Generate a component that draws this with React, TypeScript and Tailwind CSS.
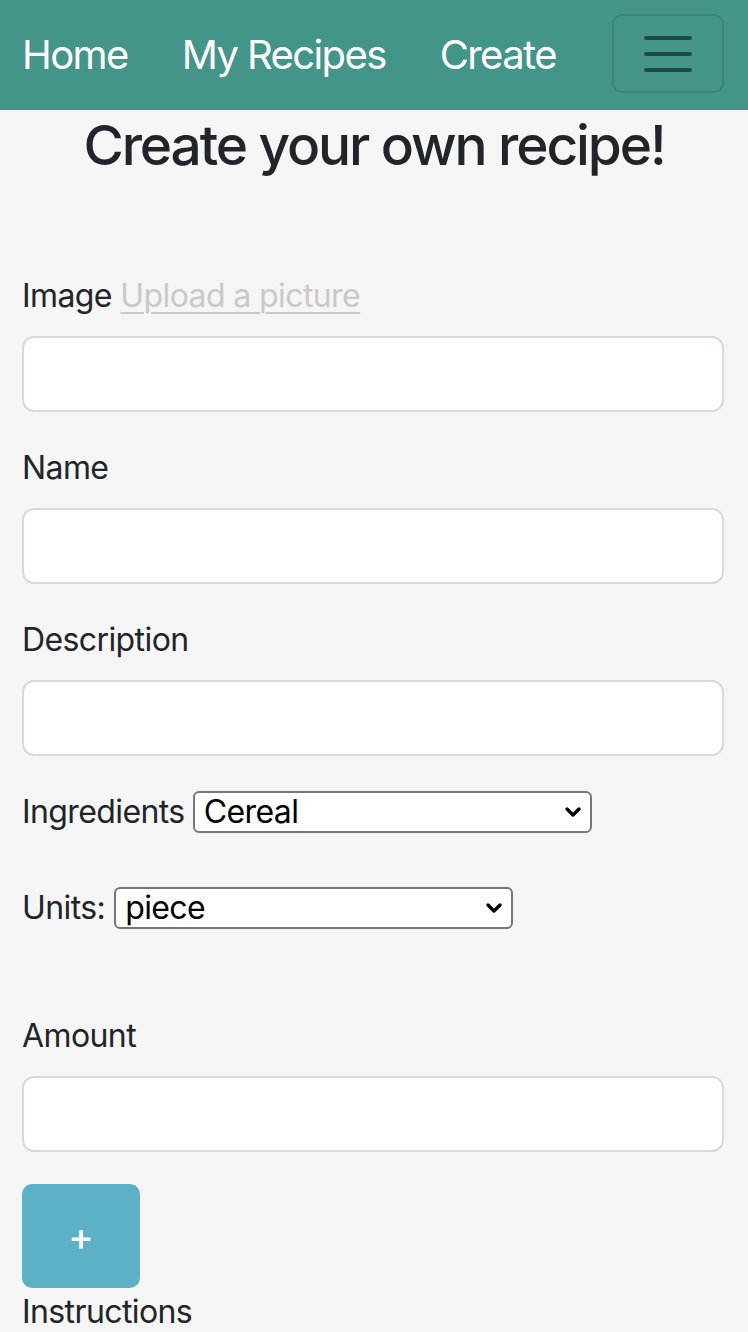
import React from "react";

function Chevron() {
  return (
    <svg
      className="pointer-events-none absolute right-[10px] top-1/2 -translate-y-1/2"
      width="18"
      height="12"
      viewBox="0 0 18 12"
      fill="none"
    >
      <path d="M3 3 L9 9 L15 3" stroke="#000" strokeWidth="3.4" strokeLinecap="round" strokeLinejoin="round" />
    </svg>
  );
}

function Select({ value, width }: { value: string; width: string }) {
  return (
    <div className={`relative ${width} h-[42px]`}>
      <select
        defaultValue={value}
        className="h-full w-full appearance-none rounded-[6px] border-2 border-[#767676] bg-white pl-[9px] text-[32px] leading-[38px] tracking-[-0.6px] text-black outline-none"
      >
        <option>{value}</option>
      </select>
      <Chevron />
    </div>
  );
}

function Field({ label, extra }: { label: string; extra?: React.ReactNode }) {
  return (
    <div className="mb-[32px]">
      <label className="mb-[16px] block text-[32px] leading-[48px] tracking-[-0.6px]">
        {label}
        {extra}
      </label>
      <input className="block h-[76px] w-full rounded-[12px] border-2 border-[#d6d9dd] bg-white outline-none" />
    </div>
  );
}

export default function App() {
  return (
    <div className="min-h-[1332px] bg-[#f5f5f5] font-[Inter,sans-serif] text-[#212529]">
      <nav className="flex h-[110px] items-start justify-between bg-[#43958a] pl-[22px] pr-[24px]">
        <div className="mt-[25px] flex gap-[54px] text-[40px] leading-[60px] tracking-[-1.6px] text-white">
          <a>Home</a>
          <a>My Recipes</a>
          <a>Create</a>
        </div>
        <button className="mt-[14px] flex h-[79px] w-[112px] flex-col items-center justify-center gap-[12px] rounded-[10px] border-2 border-black/10">
          <span className="block h-[4px] w-[48px] rounded-full bg-[#1f4a43]" />
          <span className="block h-[4px] w-[48px] rounded-full bg-[#1f4a43]" />
          <span className="block h-[4px] w-[48px] rounded-full bg-[#1f4a43]" />
        </button>
      </nav>

      <h1 className="mt-[2px] text-center text-[55px] font-medium leading-[66px] tracking-[-2.1px]">
        Create your own recipe!
      </h1>

      <form className="mt-[94px] pl-[22px] pr-[24px]">
        <Field
          label="Image"
          extra={
            <>
              {" "}
              <a className="text-[#c9c9c9] underline decoration-2 underline-offset-[5px]">Upload a picture</a>
            </>
          }
        />
        <Field label="Name" />
        <Field label="Description" />

        <div className="flex h-[48px] items-center">
          <span className="text-[32px] leading-[48px] tracking-[-0.6px]">Ingredients</span>
          <div className="ml-[8px]">
            <Select value="Cereal" width="w-[399px]" />
          </div>
        </div>

        <div className="mt-[48px] flex h-[48px] items-center">
          <span className="text-[32px] leading-[48px] tracking-[-0.6px]">Units:</span>
          <div className="ml-[9px]">
            <Select value="piece" width="w-[399px]" />
          </div>
        </div>

        <div className="mt-[80px]">
          <Field label="Amount" />
        </div>

        <button
          type="button"
          className="flex h-[104px] w-[118px] items-center justify-center rounded-[10px] bg-[#5db1c6] text-[38px] font-medium leading-none text-white"
        >
          +
        </button>

        <label className="block text-[32px] leading-[48px] tracking-[-0.6px]">Instructions</label>
      </form>
    </div>
  );
}
